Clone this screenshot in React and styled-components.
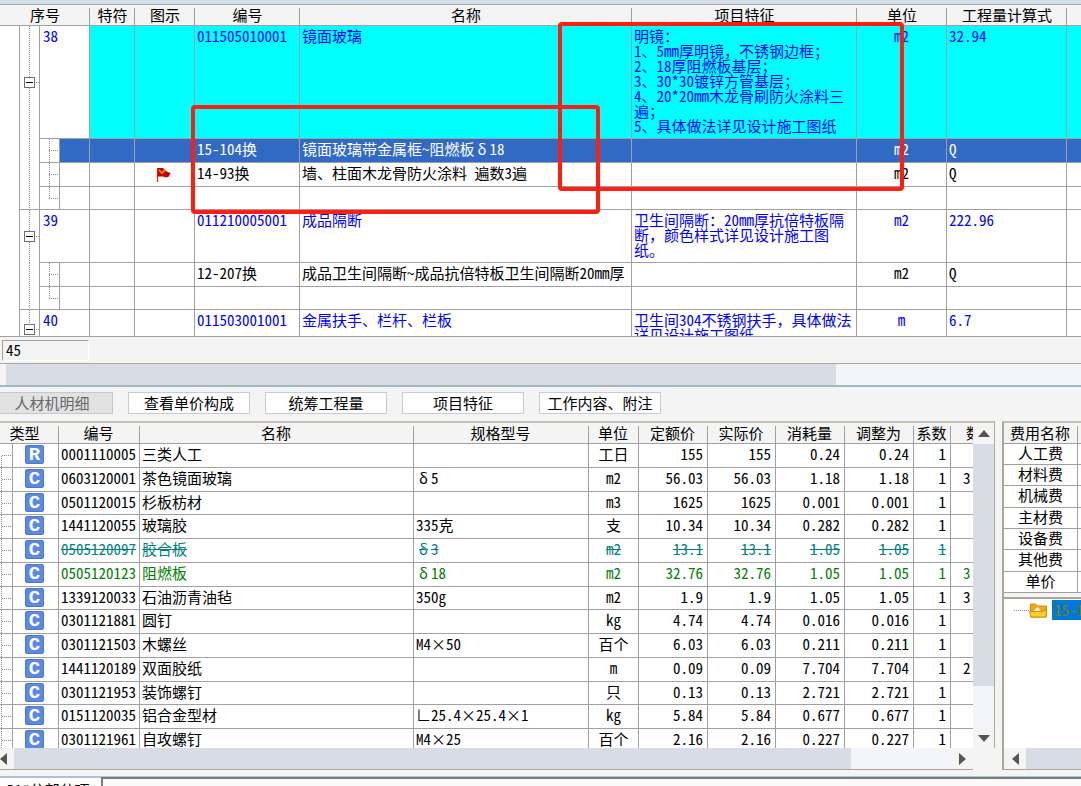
import React from 'react';
import styled, { createGlobalStyle, css } from 'styled-components';

const line = '#a0a0a0';
const tan = '#aca899';
const face = '#f4f4f4';
const thumb = '#d7dce5';
const track = '#f3f5fb';

const dots = (dir) => `repeating-linear-gradient(${dir}, #8a8a8a 0 1px, transparent 1px 2px)`;

const GlobalStyle = createGlobalStyle`
  * { box-sizing: border-box; }
  body {
    margin: 0;
    background: ${face};
    overflow: hidden;
  }
  body, button, input, table {
    font-family: 'Noto Sans Mono CJK SC', 'Noto Sans CJK SC', monospace;
    font-size: 15px;
    line-height: 15px;
    color: #000;
  }
`;

const Page = styled.main`
  display: flex;
  flex-direction: column;
  height: 100vh;
  overflow: hidden;
`;

const TopStrip = styled.div`
  flex: none;
  height: 5px;
  background: #d2dee7;
  border-bottom: 1px solid ${tan};
`;

const BillPane = styled.section`
  position: relative;
  flex: none;
  height: 332px;
  overflow: hidden;
  background: #fff;
  border-bottom: 1px solid ${line};
`;

const Clip = styled.div`
  height: 100%;
  overflow: hidden;
`;

const Table = styled.table`
  width: 100%;
  table-layout: fixed;
  border-collapse: separate;
  border-spacing: 0;
`;

const Th = styled.th`
  height: 21px;
  padding: 0 ${(p) => p.$shift || 0}px 2px 0;
  font-weight: normal;
  white-space: nowrap;
  overflow: hidden;
  text-align: ${(p) => (p.$cut ? 'left' : 'center')};
  padding-left: ${(p) => (p.$cut ? '15px' : 0)};
  background: linear-gradient(${line}, ${line}) right bottom / 1px calc(100% - 3px) no-repeat ${face};
  border-bottom: 1px solid ${line};
  &:last-child { background: ${face}; }
`;

const Td = styled.td`
  padding: 2px 4px 0 ${(p) => p.$indent || 2}px;
  vertical-align: top;
  white-space: pre;
  overflow: hidden;
  text-align: ${(p) => p.$align || 'left'};
  ${(p) => p.$align === 'center' && 'padding-right: 2px;'}
  border-right: 1px solid ${line};
  border-bottom: 1px solid ${line};
  &:last-child { border-right: 0; }
`;

const BillRow = styled.tr`
  height: ${(p) => p.$height || 24}px;
  color: ${(p) => (p.$selected ? '#fff' : p.$group ? '#0000ff' : '#000')};
  ${(p) => p.$selected && css`${Td} { background: #316ac5; }`}
  ${(p) => p.$cyan && css`${Td}:nth-child(n + 4) { background: #00ffff; }`}
`;

const Gutter = styled.td`
  padding: 0;
  background: #fff;
  border-right: 1px solid ${line};
`;

const Trunk = styled.td`
  padding: 0;
  text-align: center;
  vertical-align: middle;
  border-right: 1px solid ${line};
  border-bottom: ${(p) => (p.$last ? `1px solid ${line}` : 'none')};
  background: ${(p) => p.$node && `${dots('to right')} right center / 9px 1px no-repeat, `}
    ${dots('to bottom')} 9px 0 / 1px 100% no-repeat #fff;
`;

const Branch = styled.td`
  padding: 0;
  border-right: 1px solid ${line};
  border-bottom: 1px solid ${line};
  background:
    ${dots('to right')} 9px center / 10px 1px no-repeat,
    ${dots('to bottom')} 9px 0 / 1px ${(p) => (p.$last ? '50%' : '100%')} no-repeat #fff;
`;

const Toggle = styled.button`
  display: block;
  width: 11px;
  height: 11px;
  margin: 0 auto;
  padding: 0;
  border: 1px solid #6e6e6e;
  background: linear-gradient(#000, #000) center / 7px 1px no-repeat #fff;
`;

const Flag = styled.svg`
  display: block;
  margin: 2px auto 0;
`;

const Mark = styled.div`
  position: absolute;
  left: ${(p) => p.$x}px;
  top: ${(p) => p.$y}px;
  width: ${(p) => p.$w}px;
  height: ${(p) => p.$h}px;
  border: 4px solid #ff1e10;
  border-radius: 4px;
  pointer-events: none;
`;

const Wide = styled.span`
  display: inline-block;
  width: 15px;
  text-align: center;
  text-decoration: inherit;
`;

const Struck = styled.s`
  text-decoration: line-through;
`;

const StatusBar = styled.div`
  flex: none;
  height: 26px;
  padding: 3px 2px;
  background: ${face};
`;

const StatusInput = styled.input`
  display: block;
  width: 87px;
  height: 21px;
  padding: 0 3px 2px;
  background: ${face};
  border: 1px solid #fff;
  border-top-color: ${line};
  border-left-color: ${line};
  border-radius: 0;
  outline: 0;
`;

const Scroll = styled.div`
  display: grid;
  flex: none;
  grid-template-columns: ${(p) => p.$parts};
  background: ${track};
`;

const PaneScroll = styled(Scroll)`
  height: 24px;
  border-top: 1px solid ${tan};
  border-bottom: 2px solid #a5b7bf;
`;

const Thumb = styled.div`
  background: ${thumb};
`;

const Face = styled.div`
  background: ${face};
`;

const ScrollButton = styled.button`
  display: flex;
  align-items: center;
  justify-content: ${(p) => p.$pos || 'center'};
  padding: 0;
  border: 0;
  background: ${face};
`;

const Tabs = styled.nav`
  display: flex;
  flex: none;
  gap: 15px;
  height: 34px;
  margin-left: -9px;
  padding: 5px 0 7px;
`;

const Tab = styled.button`
  width: 122px;
  padding: 0 0 2px;
  border: 1px solid ${(p) => (p.$active ? '#c4c8cc' : '#c6cbd8')};
  background: ${(p) => (p.$active ? '#e2e2e2' : '#fff')};
  color: ${(p) => (p.$active ? '#666' : '#000')};
`;

const Lower = styled.div`
  display: grid;
  flex: 1;
  min-height: 0;
  grid-template-columns: minmax(0, 1fr) 79px;
  gap: 7px;
`;

const DetailPane = styled.section`
  display: grid;
  min-width: 0;
  min-height: 0;
  grid-template-columns: minmax(0, 1fr) 22px;
  grid-template-rows: minmax(0, 1fr) 22px;
  border-top: 2px solid #c3c0b4;
`;

const DetailBody = styled.div`
  overflow: hidden;
  background: #fff;
`;

const DetailRow = styled.tr`
  height: 24px;
  color: ${(p) => p.$color || '#000'};
  &:nth-child(4n + 3) { height: 23px; }
`;

const DetailBranch = styled(Td)`
  background:
    ${dots('to right')} 2px center / 10px 1px no-repeat,
    ${dots('to bottom')} 1px ${(p) => (p.$first ? '12px' : 0)} / 1px 100% no-repeat #fff;
`;

const IconCell = styled(Td)`
  padding: 1px 2px 0 0;
`;

const Badge = styled.span`
  display: block;
  width: 19px;
  height: 19px;
  margin: 0 auto;
  border: 1px solid #4c78cc;
  border-radius: 2px;
  background: #5c8ae2;
  color: #fff;
  font: bold 19px/18px 'Liberation Mono', monospace;
  text-align: center;
`;

const VScroll = styled.div`
  display: grid;
  grid-template-rows: 21px minmax(0, 242fr) minmax(0, 42fr) 20px;
  background: ${track};
  border-right: 1px solid ${tan};
`;

const HScroll = styled(Scroll)`
  height: 22px;
  border-bottom: 1px solid ${tan};
`;

const FeePane = styled.aside`
  display: flex;
  flex-direction: column;
  min-width: 0;
  min-height: 0;
  border-top: 2px solid #c3c0b4;
  border-left: 2px solid ${tan};
`;

const FeeRow = styled.tr`
  height: 21px;
  background: #fff;
  &:nth-child(3n) { height: 22px; }
  ${Td} { padding-top: 1px; }
`;

const FeeTree = styled.div`
  flex: 1;
  min-height: 0;
  margin-top: 4px;
  padding-top: 1px;
  overflow: hidden;
  background: #fff;
  border-top: 2px solid ${tan};
`;

const TreeItem = styled.a`
  display: flex;
  align-items: center;
  height: 20px;
  padding-left: 10px;
  text-decoration: none;
  color: #808000;
  background: ${dots('to right')} 10px center / 15px 1px no-repeat;
  svg { flex: none; margin: 0 5px 0 15px; }
  span { flex: 1; overflow: hidden; height: 20px; padding: 2px 0 3px 2px; white-space: nowrap; background: #0078d7; }
`;

const BottomBar = styled.footer`
  display: flex;
  flex: none;
  align-items: flex-start;
  height: 16px;
  padding-top: 6px;
  overflow: hidden;
`;

const SheetTab = styled.button`
  flex: none;
  width: 101px;
  height: 24px;
  padding: 0 0 0 7px;
  text-align: left;
  white-space: nowrap;
  background: #fff;
  border: 0;
  border-top: 2px solid #a9c3d0;
`;

const SheetRest = styled.div`
  flex: 1;
  height: 24px;
  background: #fafafa;
  border-top: 1px solid #a9c3d0;
  box-shadow: inset 2px 2px 0 #7c7c7c;
`;

const Arrow = ({ dir }) => {
  const d = {
    up: 'M0 7 6 0 12 7Z',
    down: 'M0 0 6 7 12 0Z',
    left: 'M7 0 0 6 7 12Z',
    right: 'M0 0 7 6 0 12Z',
  }[dir];
  const tall = dir === 'left' || dir === 'right';
  return (
    <svg width={tall ? 7 : 12} height={tall ? 12 : 7} aria-hidden="true">
      <path d={d} fill="#555" />
    </svg>
  );
};

const RedFlag = () => (
  <Flag width="15" height="15" viewBox="0 0 15 15" aria-label="flag">
    <path d="M1.500 1v14" stroke="#e02020" strokeWidth="1.200" />
    <path d="M2 1h5l3 3 2 1 2.500 1-2 4-3 .5L7 9.500H2z" fill="#cc0000" />
    <path d="M3 3l3 3 3-3" stroke="#f0a800" strokeWidth="1.500" fill="none" />
  </Flag>
);

const Folder = () => (
  <svg width="18" height="15" viewBox="0 0 18 15" aria-hidden="true">
    <path d="M1.500 1h5l1.500 2h9.500v11H1.500z" fill="#f2a71b" stroke="#d98a0b" />
    <path d="M4 9l4.500-5 4 5z" fill="#fff" />
    <path d="M.5 8.500H13l2-1h2.500L17 14H2z" fill="#fcd21c" stroke="#d98a0b" />
  </svg>
);

// Greek delta and the multiplication sign take a full character cell in this grid.
const Text = ({ children }) =>
  (children || '').split(/([δ×∟])/).map((s, i) => (i % 2 ? <Wide key={i}>{s}</Wide> : s));

const bills = [
  { no: '38', h: 113, cyan: true, code: '011505010001', name: '镜面玻璃', unit: 'm2', qty: '32.94',
    feature: '明镜：\n1、5mm厚明镜，不锈钢边框；\n2、18厚阻燃板基层；\n3、30*30镀锌方管基层；\n4、20*20mm木龙骨刷防火涂料三\n遍；\n5、具体做法详见设计施工图纸',
    items: [
      { code: '15-104换', name: '镜面玻璃带金属框~阻燃板δ18', unit: 'm2', qty: 'Q', selected: true },
      { code: '14-93换', name: '墙、柱面木龙骨防火涂料 遍数3遍', unit: 'm2', qty: 'Q', flag: true },
      {},
    ] },
  { no: '39', h: 53, code: '011210005001', name: '成品隔断', unit: 'm2', qty: '222.96',
    feature: '卫生间隔断：20mm厚抗倍特板隔\n断，颜色样式详见设计施工图\n纸。',
    items: [
      { code: '12-207换', name: '成品卫生间隔断~成品抗倍特板卫生间隔断20mm厚', unit: 'm2', qty: 'Q' },
      {},
    ] },
  { no: '40', h: 38, code: '011503001001', name: '金属扶手、栏杆、栏板', unit: 'm', qty: '6.7',
    feature: '卫生间304不锈钢扶手，具体做法\n详见设计施工图纸。', items: [] },
];

const TEAL = '#008080';
const GREEN = '#008000';
const details = [
  ['R', '0001110005', '三类人工', '', '工日', '155', '0.24', ''],
  ['C', '0603120001', '茶色镜面玻璃', 'δ5', 'm2', '56.03', '1.18', '3'],
  ['C', '0501120015', '杉板枋材', '', 'm3', '1625', '0.001', ''],
  ['C', '1441120055', '玻璃胶', '335克', '支', '10.34', '0.282', ''],
  ['C', '0505120097', '胶合板', 'δ3', 'm2', '13.1', '1.05', '', TEAL],
  ['C', '0505120123', '阻燃板', 'δ18', 'm2', '32.76', '1.05', '3', GREEN],
  ['C', '1339120033', '石油沥青油毡', '350g', 'm2', '1.9', '1.05', '3'],
  ['C', '0301121881', '圆钉', '', 'kg', '4.74', '0.016', ''],
  ['C', '0301121503', '木螺丝', 'M4×50', '百个', '6.03', '0.211', ''],
  ['C', '1441120189', '双面胶纸', '', 'm', '0.09', '7.704', '2'],
  ['C', '0301121953', '装饰螺钉', '', '只', '0.13', '2.721', ''],
  ['C', '0151120035', '铝合金型材', '∟25.4×25.4×1', 'kg', '5.84', '0.677', ''],
  ['C', '0301121961', '自攻螺钉', 'M4×25', '百个', '2.16', '0.227', ''],
];

const Cols = ({ widths }) => (
  <colgroup>
    {widths.map((w, i) => <col key={i} width={w || undefined} />)}
  </colgroup>
);

const BillCells = ({ row }) => (
  <>
    <Td />
    <Td>{row.flag && <RedFlag />}</Td>
    <Td>{row.code}</Td>
    <Td><Text>{row.name}</Text></Td>
    <Td>{row.feature}</Td>
    <Td $align="center">{row.unit}</Td>
    <Td>{row.qty}</Td>
    <Td />
  </>
);

const BillTable = () => (
  <Table>
    <Cols widths={[20, 20, 20, 30, 45, 60, 105, 0, 225, 90, 120, 14]} />
    <thead>
      <tr>
        <Th colSpan={4}>序号</Th>
        {['特符', '图示', '编号', '名称', '项目特征', '单位', '工程量计算式', ''].map((h, i) => <Th key={i}>{h}</Th>)}
      </tr>
    </thead>
    <tbody>
      {bills.map((b) => (
        <React.Fragment key={b.no}>
          <BillRow $group $height={b.h} $cyan={b.cyan}>
            <Gutter />
            <Trunk $node><Toggle aria-label="collapse" /></Trunk>
            <Td colSpan={2} $indent={3}>{b.no}</Td>
            <BillCells row={b} />
          </BillRow>
          {b.items.map((it, i) => {
            const last = i === b.items.length - 1;
            return (
              <BillRow key={i} $selected={it.selected} $height={last ? 23 : 24}>
                <Gutter />
                <Trunk $last={last} />
                <Branch $last={last} />
                <Td />
                <BillCells row={it} />
              </BillRow>
            );
          })}
        </React.Fragment>
      ))}
    </tbody>
  </Table>
);

const DetailCell = ({ struck, children, ...rest }) => (
  <Td {...rest}>{struck && children ? <Struck>{children}</Struck> : children}</Td>
);

const DetailTable = () => (
  <Table>
    <Cols widths={[13, 46, 81, 0, 175, 50, 69, 68, 69, 69, 37, 22]} />
    <thead>
      <tr>
        <Th colSpan={2} $shift={10}>类型</Th>
        {['编号', '名称', '规格型号', '单位', '定额价', '实际价', '消耗量', '调整为', '系数'].map((h) => <Th key={h} $shift={2}>{h}</Th>)}
        <Th $cut>数量</Th>
      </tr>
    </thead>
    <tbody>
      {details.map(([type, code, name, spec, unit, price, used, qty, color], i) => {
        const struck = color === TEAL;
        return (
          <DetailRow key={code} $color={color}>
            <DetailBranch $first={i === 0} />
            <IconCell><Badge>{type}</Badge></IconCell>
            <DetailCell struck={struck}>{code}</DetailCell>
            <DetailCell struck={struck}>{name}</DetailCell>
            <DetailCell struck={struck}>{spec && <Text>{spec}</Text>}</DetailCell>
            <DetailCell struck={struck} $align="center">{unit}</DetailCell>
            <DetailCell struck={struck} $align="right">{price}</DetailCell>
            <DetailCell struck={struck} $align="right">{price}</DetailCell>
            <DetailCell struck={struck} $align="right">{used}</DetailCell>
            <DetailCell struck={struck} $align="right">{used}</DetailCell>
            <DetailCell struck={struck} $align="right">1</DetailCell>
            <Td $indent={12}>{qty}</Td>
          </DetailRow>
        );
      })}
    </tbody>
  </Table>
);

export default function App() {
  return (
    <Page>
      <GlobalStyle />
      <TopStrip />
      <BillPane>
        <Clip><BillTable /></Clip>
        <Mark $x={191} $y={100} $w={409} $h={109} />
        <Mark $x={558} $y={17} $w={346} $h={169} />
      </BillPane>
      <StatusBar><StatusInput aria-label="row" defaultValue="45" /></StatusBar>
      <PaneScroll $parts="6px minmax(0, 830fr) minmax(0, 245fr)">
        <Face />
        <Thumb />
      </PaneScroll>
      <Tabs>
        <Tab $active>人材机明细</Tab>
        <Tab>查看单价构成</Tab>
        <Tab>统筹工程量</Tab>
        <Tab>项目特征</Tab>
        <Tab>工作内容、附注</Tab>
      </Tabs>
      <Lower>
        <DetailPane>
          <DetailBody><DetailTable /></DetailBody>
          <VScroll>
            <ScrollButton aria-label="up"><Arrow dir="up" /></ScrollButton>
            <Thumb />
            <div />
            <ScrollButton aria-label="down"><Arrow dir="down" /></ScrollButton>
          </VScroll>
          <HScroll $parts="14px minmax(0, 837fr) minmax(0, 100fr) 22px">
            <ScrollButton aria-label="left" $pos="flex-start"><Arrow dir="left" /></ScrollButton>
            <Thumb />
            <div />
            <ScrollButton aria-label="right"><Arrow dir="right" /></ScrollButton>
          </HScroll>
          <Face />
        </DetailPane>
        <FeePane>
          <Table>
            <Cols widths={[74, 0]} />
            <thead><tr><Th $shift={2}>费用名称</Th><Th /></tr></thead>
            <tbody>
              {['人工费', '材料费', '机械费', '主材费', '设备费', '其他费', '单价'].map((f) => (
                <FeeRow key={f}><Td $align="center">{f}</Td><Td /></FeeRow>
              ))}
            </tbody>
          </Table>
          <FeeTree>
            <TreeItem href="#item"><Folder /><span>15-104</span></TreeItem>
          </FeeTree>
          <HScroll $parts="22px minmax(0, 1fr)">
            <ScrollButton aria-label="left"><Arrow dir="left" /></ScrollButton>
            <Thumb />
          </HScroll>
        </FeePane>
      </Lower>
      <BottomBar>
        <SheetTab>B1#分部分项</SheetTab>
        <SheetRest />
      </BottomBar>
    </Page>
  );
}
